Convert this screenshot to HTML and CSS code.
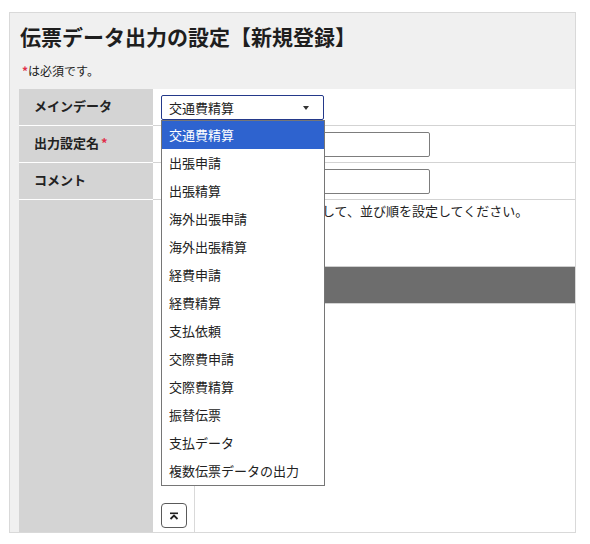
FILE: index.html
```html
<!DOCTYPE html>
<html lang="ja">
<head>
<meta charset="utf-8">
<link rel="stylesheet" href="styles.css">
</head>
<body>
<div class="panel">
  <h1 class="title">伝票データ出力の設定【新規登録】</h1>
  <p class="note"><span class="req">*</span>は必須です。</p>
  <div class="form">
    <div class="label">メインデータ</div>
    <div class="field">
      <div class="select-wrap">
        <div class="select">交通費精算<span class="arrow"></span></div>
        <ul class="dropdown">
          <li class="opt selected">交通費精算</li>
          <li class="opt">出張申請</li>
          <li class="opt">出張精算</li>
          <li class="opt">海外出張申請</li>
          <li class="opt">海外出張精算</li>
          <li class="opt">経費申請</li>
          <li class="opt">経費精算</li>
          <li class="opt">支払依頼</li>
          <li class="opt">交際費申請</li>
          <li class="opt">交際費精算</li>
          <li class="opt">振替伝票</li>
          <li class="opt">支払データ</li>
          <li class="opt">複数伝票データの出力</li>
        </ul>
      </div>
    </div>
    <div class="label">出力設定名<span class="req">*</span></div>
    <div class="field"><div class="input"></div></div>
    <div class="label">コメント</div>
    <div class="field"><div class="input"></div></div>
    <div class="label label-tall"></div>
    <div class="field field-tall">
      <p class="hint">出力項目をドラッグで移動して、並び順を設定してください。</p>
      <div class="sorter">
        <div class="sort-buttons">
          <button class="btn-top" type="button" aria-label="先頭へ">
            <svg width="10" height="8" viewBox="0 0 10 8"><rect x="1" y="0.5" width="8" height="1.6" fill="#222"/><path d="M1.5 7 L5 3.6 L8.5 7" fill="none" stroke="#222" stroke-width="1.8"/></svg>
          </button>
        </div>
        <div class="sort-list"><div class="sort-head"></div></div>
      </div>
    </div>
  </div>
</div>
</body>
</html>
```

FILE: styles.css
```css
html, body {
  margin: 0;
  padding: 0;
  background: #ffffff;
}
body {
  font-family: "Noto Sans CJK JP", "Noto Sans", sans-serif;
  color: #222222;
}
.panel {
  position: relative;
  box-sizing: border-box;
  width: 567px;
  height: 521px;
  margin: 12px 0 0 9px;
  border: 1px solid #d9d9d9;
  background: #f0f0f0;
  padding: 8px 0 0 9px;
  overflow: hidden;
}
.title {
  margin: 0 0 0 1px;
  font-size: 21px;
  line-height: 30px;
  font-weight: 700;
  color: #1e1e1e;
}
.note {
  margin: 11px 0 0 3px;
  font-size: 12px;
  line-height: 18px;
}
.req {
  color: #e0304a;
  font-weight: 700;
}
.form {
  margin-top: 9px;
  display: grid;
  grid-template-columns: 134px 1fr;
}
.label {
  box-sizing: border-box;
  height: 37px;
  background: #d4d4d4;
  border-bottom: 1px solid #ffffff;
  padding: 7px 0 0 15px;
  font-size: 13px;
  line-height: 20px;
  font-weight: 700;
  color: #222;
}
.label .req {
  margin-left: 2px;
}
.field {
  box-sizing: border-box;
  height: 37px;
  background: #ffffff;
  border-bottom: 1px solid #d3d3d3;
  padding: 6px 0 0 8px;
}
.select-wrap {
  position: relative;
  width: 164px;
}
.select {
  position: relative;
  box-sizing: border-box;
  width: 163px;
  height: 25px;
  border: 1px solid #24398a;
  border-radius: 2px;
  padding-left: 7px;
  font-size: 13px;
  line-height: 23px;
  color: #222;
}
.arrow {
  position: absolute;
  right: 14px;
  top: 10px;
  width: 0;
  height: 0;
  border-left: 3.5px solid transparent;
  border-right: 3.5px solid transparent;
  border-top: 4px solid #333;
}
.dropdown {
  position: absolute;
  z-index: 10;
  left: 0;
  top: 25px;
  box-sizing: border-box;
  width: 164px;
  margin: 0;
  padding: 0;
  list-style: none;
  background: #ffffff;
  border: 1px solid #767676;
}
.opt {
  height: 28px;
  line-height: 28px;
  padding-left: 7px;
  font-size: 13px;
  color: #222;
  white-space: nowrap;
}
.opt.selected {
  background: #2e63cf;
  color: #ffffff;
}
.input {
  box-sizing: border-box;
  width: 269px;
  height: 25px;
  border: 1px solid #7d7d7d;
  border-radius: 2px;
  background: #fff;
}
.label-tall,
.field-tall {
  height: 340px;
  border-bottom: none;
}
.field-tall {
  padding: 0;
  display: flex;
  flex-direction: column;
}
.hint {
  margin: 3px 0 0 13px;
  font-size: 13px;
  line-height: 16px;
  white-space: nowrap;
}
.sorter {
  margin-top: 47px;
  flex: 1;
  display: flex;
}
.sort-buttons {
  box-sizing: border-box;
  width: 42px;
  border-right: 1px solid #d9d9d9;
  display: flex;
  flex-direction: column;
  justify-content: flex-end;
  padding: 0 0 12px 8px;
}
.btn-top {
  box-sizing: border-box;
  width: 26px;
  height: 25px;
  padding: 0;
  border: 1px solid #5a5a5a;
  border-radius: 4px;
  background: #ffffff;
  display: flex;
  align-items: center;
  justify-content: center;
}
.sort-list {
  flex: 1;
}
.sort-head {
  height: 36px;
  background: #6d6d6d;
  border-top: 1px solid #cfcfcf;
  border-bottom: 1px solid #d4d4d4;
}
```
